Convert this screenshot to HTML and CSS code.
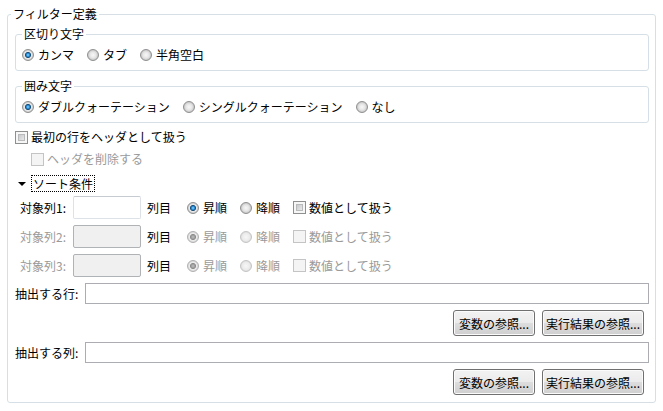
FILE: index.html
```html
<!DOCTYPE html>
<html>
<head>
  <meta charset="UTF-8">
  <meta name="viewport" content="width=device-width, initial-scale=1">
  <link rel="stylesheet" href="styles.css">
</head>
<body>
  <div class="page">
    <fieldset class="group outer">
      <legend>フィルター定義</legend>

      <fieldset class="group inner">
        <legend>区切り文字</legend>
        <div class="options">
          <label class="opt"><input type="radio" name="sep" checked>カンマ</label>
          <label class="opt"><input type="radio" name="sep">タブ</label>
          <label class="opt"><input type="radio" name="sep">半角空白</label>
        </div>
      </fieldset>

      <fieldset class="group inner second">
        <legend>囲み文字</legend>
        <div class="options">
          <label class="opt"><input type="radio" name="quote" checked>ダブルクォーテーション</label>
          <label class="opt"><input type="radio" name="quote">シングルクォーテーション</label>
          <label class="opt"><input type="radio" name="quote">なし</label>
        </div>
      </fieldset>

      <label class="check-row"><input type="checkbox">最初の行をヘッダとして扱う</label>
      <label class="check-row sub disabled"><input type="checkbox" disabled>ヘッダを削除する</label>

      <div class="section-head">
        <span class="arrow"></span>
        <span class="focus">ソート条件</span>
      </div>

      <div class="sort-row first">
        <span class="sort-label">対象列1:</span>
        <input type="text" class="sort-input">
        <span class="unit">列目</span>
        <label class="opt"><input type="radio" name="o1" checked>昇順</label>
        <label class="opt"><input type="radio" name="o1">降順</label>
        <label class="opt"><input type="checkbox">数値として扱う</label>
      </div>
      <div class="sort-row disabled">
        <span class="sort-label">対象列2:</span>
        <input type="text" class="sort-input" disabled>
        <span class="unit">列目</span>
        <label class="opt"><input type="radio" name="o2" checked disabled>昇順</label>
        <label class="opt"><input type="radio" name="o2" disabled>降順</label>
        <label class="opt"><input type="checkbox" disabled>数値として扱う</label>
      </div>
      <div class="sort-row disabled">
        <span class="sort-label">対象列3:</span>
        <input type="text" class="sort-input" disabled>
        <span class="unit">列目</span>
        <label class="opt"><input type="radio" name="o3" checked disabled>昇順</label>
        <label class="opt"><input type="radio" name="o3" disabled>降順</label>
        <label class="opt"><input type="checkbox" disabled>数値として扱う</label>
      </div>

      <div class="field-row">
        <span class="field-label">抽出する行:</span>
        <input type="text" class="field-input">
      </div>
      <div class="button-row">
        <button class="btn small">変数の参照...</button>
        <button class="btn wide">実行結果の参照...</button>
      </div>

      <div class="field-row">
        <span class="field-label">抽出する列:</span>
        <input type="text" class="field-input">
      </div>
      <div class="button-row">
        <button class="btn small">変数の参照...</button>
        <button class="btn wide">実行結果の参照...</button>
      </div>
    </fieldset>
  </div>
</body>
</html>
```

FILE: styles.css
```css
html, body {
  margin: 0;
  padding: 0;
  background-color: #FFFFFF;
}

body {
  font-family: "Noto Sans CJK JP", "Liberation Sans", sans-serif;
  font-size: 12px;
  line-height: 16px;
  color: #000000;
}

.page {
  padding: 7px 7px 0 7px;
}

.group {
  margin: 0;
  border: 1px solid #d5dfe5;
  border-radius: 3px;
  min-inline-size: 0;
}

.group legend {
  padding: 0 2px;
  line-height: 14px;
}

.outer {
  padding: 6px 6px 7px 7px;
}

.outer > legend {
  margin-left: -4px;
}

.inner {
  padding: 6px 6px 7px 6px;
}

.inner.second {
  margin-top: 8px;
}

.options {
  display: flex;
  align-items: center;
  height: 16px;
}

.opt {
  display: inline-flex;
  align-items: center;
  margin-right: 13px;
  white-space: nowrap;
}

input[type="radio"] {
  appearance: none;
  -webkit-appearance: none;
  box-sizing: border-box;
  width: 12px;
  height: 12px;
  margin: 0 4px 0 0;
  border: 1px solid #8e8f8f;
  border-radius: 50%;
  background: radial-gradient(circle closest-side, #f8f8f8 0, #e6e6e6 60%, #c8c8c8 100%);
}

input[type="radio"]:checked {
  background: radial-gradient(circle closest-side, #8fdcff 0, #2b8fd8 30%, #17486f 55%, #eeeeee 64%, #cdcdcd 100%);
}

input[type="radio"]:disabled {
  border-color: #c4c4c4;
  background: radial-gradient(circle closest-side, #f7f7f7 0, #ececec 70%, #dedede 100%);
}

input[type="radio"]:checked:disabled {
  border-color: #b0b0b0;
  background: radial-gradient(circle closest-side, #c0c0c0 0, #8a8a8a 55%, #f0f0f0 64%, #d8d8d8 100%);
}

input[type="checkbox"] {
  appearance: none;
  -webkit-appearance: none;
  box-sizing: border-box;
  width: 13px;
  height: 13px;
  margin: 0 3px 0 0;
  padding: 2px;
  border: 1px solid #8e8f8f;
  background: linear-gradient(135deg, #c2c4c6, #eeeeee) content-box, #f6f6f6;
  box-shadow: inset 0 0 0 2px #f6f6f6, inset 0 0 0 3px #b8babc;
}

input[type="checkbox"]:disabled {
  border-color: #c4c4c4;
  background: #f4f4f4;
  box-shadow: none;
}

.disabled {
  color: #9a9a9a;
}

.check-row {
  display: flex;
  align-items: center;
  height: 16px;
  margin-top: 6px;
}

.check-row.sub {
  padding-left: 16px;
}

.section-head {
  display: flex;
  align-items: center;
  margin-top: 8px;
  height: 17px;
}

.arrow {
  width: 0;
  height: 0;
  margin-left: 3px;
  margin-right: 5px;
  border-left: 4px solid transparent;
  border-right: 4px solid transparent;
  border-top: 4px solid #000000;
}

.focus {
  border: 1px dotted #000000;
  padding: 0 1px;
  line-height: 15px;
}

.sort-row {
  display: flex;
  align-items: center;
  height: 23px;
  margin-top: 6px;
  padding-left: 5px;
}

.sort-row.first {
  margin-top: 4px;
}

.sort-label {
  width: 53px;
}

.sort-input {
  box-sizing: border-box;
  width: 68px;
  height: 23px;
  margin: 0;
  border: 1px solid #dde1e8;
  border-top-color: #c6cad1;
  border-radius: 2px;
  background-color: #FFFFFF;
}

.sort-input:disabled {
  border-color: #afb3b6;
  background-color: #f0f0f0;
}

.unit {
  margin-left: 6px;
  margin-right: 16px;
  color: #000000;
}

.field-row {
  display: flex;
  align-items: center;
  margin-top: 6px;
}

.field-label {
  width: 70px;
}

.field-input {
  flex: 1;
  box-sizing: border-box;
  height: 21px;
  margin: 0;
  border: 1px solid #abadb3;
  background-color: #FFFFFF;
}

.button-row {
  display: flex;
  justify-content: flex-end;
  gap: 7px;
  margin-top: 6px;
  padding-right: 5px;
}

.btn {
  box-sizing: border-box;
  height: 26px;
  padding: 0;
  font-family: inherit;
  font-size: 12px;
  color: #000000;
  border: 1px solid #707070;
  border-radius: 3px;
  background: linear-gradient(#f2f2f2 0%, #ebebeb 48%, #dddddd 52%, #cfcfcf 100%);
  box-shadow: inset 0 0 0 1px #fbfbfb;
}

.btn.small {
  width: 82px;
}

.btn.wide {
  width: 102px;
}
```
